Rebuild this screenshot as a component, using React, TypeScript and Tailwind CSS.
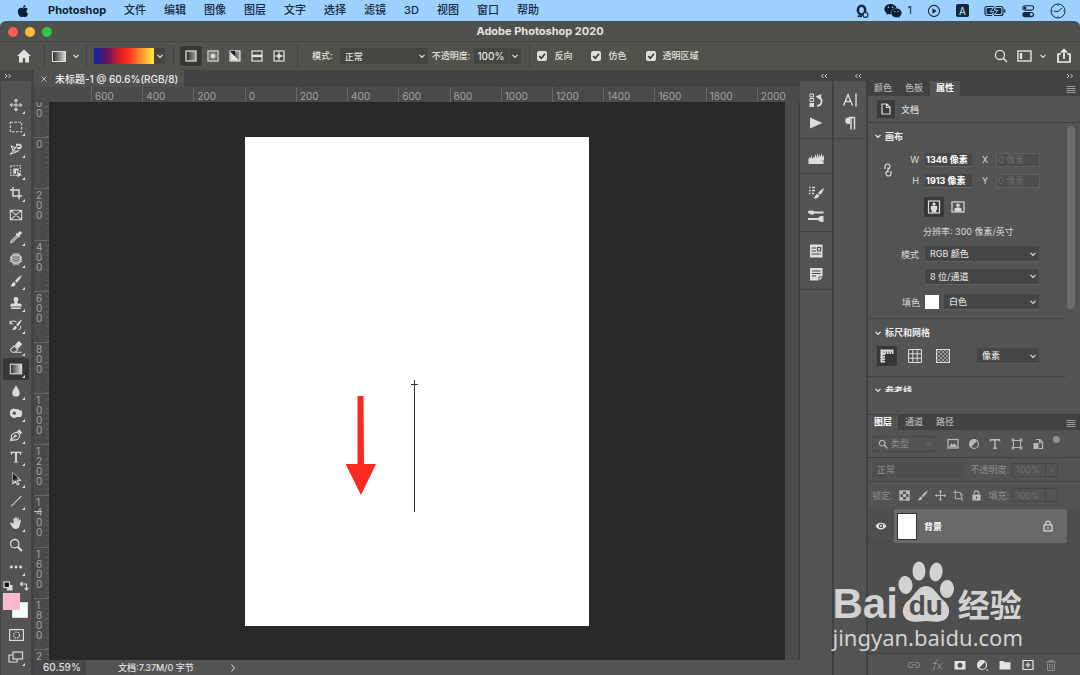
import type { ReactNode } from 'react';
import { FaApple, FaWeixin } from 'react-icons/fa';

type IconProps = { children: ReactNode; size?: string; box?: string; className?: string };

function Icon({ children, size = 'size-4', box = '0 0 16 16', className = '' }: IconProps) {
  return (
    <svg
      viewBox={box}
      className={`${size} shrink-0 ${className}`}
      fill="none"
      stroke="currentColor"
      strokeWidth="1.2"
      aria-hidden="true"
    >
      {children}
    </svg>
  );
}

const solid = { fill: 'currentColor', stroke: 'none' };

function Chevron({ className = '' }: { className?: string }) {
  return (
    <Icon size="size-2" box="0 0 8 8" className={className}>
      <path d="M1.5 2.8 4 5.3l2.5-2.5" />
    </Icon>
  );
}

function DoubleChevron({ flip = false }: { flip?: boolean }) {
  return (
    <Icon size="size-2" box="0 0 8 8" className={`text-[#cfcfcf] ${flip ? 'rotate-180' : ''}`}>
      <path d="M1 2 3 4 1 6M4.500 2l2 2-2 2" strokeWidth="1" />
    </Icon>
  );
}

const menus = ['文件', '编辑', '图像', '图层', '文字', '选择', '滤镜', '3D', '视图', '窗口', '帮助'];

function MenuBar() {
  return (
    <header className="flex h-[21px] shrink-0 items-center justify-between bg-[#9dd1ff] pr-[14px] pl-4 text-[11px] text-[#12283d]">
      <nav className="flex items-center gap-[18px]">
        <FaApple className="size-3.5 text-[#0b1d30]" />
        <button className="leading-none font-bold text-[#0b1d30]">Photoshop</button>
        {menus.map((m) => (
          <button key={m} className="leading-none font-medium">
            {m}
          </button>
        ))}
      </nav>
      <div className="flex items-center gap-[15px]">
        <Icon size="size-3.5">
          <ellipse cx="7.5" cy="7" rx="4.2" ry="5" strokeWidth="3" />
          <circle cx="12" cy="12.5" r="2.8" fill="#9dd1ff" strokeWidth="1.3" />
          <path d="M3 14h5" strokeWidth="2" />
        </Icon>
        <span className="flex items-center gap-1.5">
          <FaWeixin className="size-[18px] text-[#0b1d30]" />
          <span>1</span>
        </span>
        <Icon size="size-3.5">
          <circle cx="8" cy="8" r="6.4" />
          <path d="M6.2 4.8 11 8l-4.8 3.2z" {...solid} />
        </Icon>
        <span className="flex size-[13px] items-center justify-center rounded-[2px] bg-[#12283d] text-[10px] leading-none text-[#cfe8ff]">
          A
        </span>
        <Icon size="h-3 w-[22px]" box="0 0 22 12">
          <rect x="1" y="1.5" width="18" height="9" rx="2" />
          <rect x="2.6" y="3" width="14.8" height="6" rx="1" {...solid} />
          <path d="M20.8 4.5v3" strokeWidth="1.4" />
          <path d="M11.5 0 6 6.8h3.4L8.3 12 14 5.2h-3.4z" fill="#12283d" stroke="#9dd1ff" strokeWidth="1" />
        </Icon>
        <Icon size="size-3.5">
          <rect x="2" y="2" width="12.5" height="5" rx="2.5" />
          <circle cx="4.7" cy="4.5" r="1.6" {...solid} />
          <rect x="1.5" y="9" width="13.5" height="6" rx="3" {...solid} />
          <circle cx="11.8" cy="12" r="1.7" fill="#9dd1ff" stroke="none" />
        </Icon>
        <Icon size="size-4">
          <circle cx="8" cy="8" r="7" strokeWidth="1" />
          <path d="M12 4.800 8 8.500l-4-.3" strokeWidth="1" />
          <path d="M8 1.500v1.500M8 13v1.500M1.500 8H3M13 8h1.500" strokeWidth=".6" />
        </Icon>
      </div>
    </header>
  );
}

function TitleBar() {
  return (
    <div className="shrink-0 bg-[#9dd1ff]">
      <div className="grid h-5 grid-cols-[1fr_auto_1fr] items-center rounded-t-md border-t border-[#42505a] bg-[#50514c] px-2">
        <div className="flex gap-[7px]">
          <button aria-label="关闭" className="size-2.5 rounded-full bg-[#fb5f5b]" />
          <button aria-label="最小化" className="size-2.5 rounded-full bg-[#fdbb40]" />
          <button aria-label="全屏" className="size-2.5 rounded-full bg-[#35c648]" />
        </div>
        <h1 className="text-[11px] leading-none font-bold text-[#e4e4e0]">Adobe Photoshop 2020</h1>
      </div>
    </div>
  );
}

function Select({ label, value, className = '' }: { label: string; value: string; className?: string }) {
  return (
    <span className={`grid items-center ${className}`}>
      <select
        aria-label={label}
        className="col-start-1 row-start-1 h-full w-full min-w-0 appearance-none bg-transparent px-[5px] leading-none outline-none"
      >
        <option>{value}</option>
      </select>
      <Chevron className="pointer-events-none col-start-1 row-start-1 mr-0.5 justify-self-end" />
    </span>
  );
}

function Check({ label }: { label: string }) {
  return (
    <label className="flex items-center gap-[7px]">
      <span className="grid size-2.5 items-center">
        <input type="checkbox" defaultChecked className="col-start-1 row-start-1 size-2.5 appearance-none rounded-[2px] bg-[#dededa]" />
        <Icon size="size-2.5" box="0 0 10 10" className="pointer-events-none col-start-1 row-start-1 text-[#333]">
          <path d="M2.2 5 4.3 7.2 8 2.8" strokeWidth="1.6" />
        </Icon>
      </span>
      {label}
    </label>
  );
}

function Bar() {
  return <span className="h-[22px] w-px bg-[#434440]" />;
}

const gradientStyles: { name: string; art: ReactNode }[] = [
  { name: '线性渐变', art: <rect x="1" y="1" width="10" height="10" fill="url(#lin)" /> },
  { name: '径向渐变', art: <rect x="1" y="1" width="10" height="10" fill="url(#rad)" /> },
  {
    name: '角度渐变',
    art: (
      <>
        <rect x="1" y="1" width="10" height="10" fill="url(#lin)" />
        <path d="M1.500 2v8.500h8.500z" fill="#e4e4e4" stroke="none" />
        <path d="M1 1h5v5z" fill="#1c1c1c" stroke="none" />
      </>
    ),
  },
  {
    name: '对称渐变',
    art: (
      <>
        <rect x="1" y="1" width="10" height="10" fill="#4a4a47" />
        <path d="M1 5.9h10" strokeWidth="2.5" />
      </>
    ),
  },
  {
    name: '菱形渐变',
    art: (
      <>
        <rect x="1" y="1" width="10" height="10" fill="#4a4a47" />
        <path d="M6 2.5 7.2 4.8 9.5 6 7.2 7.2 6 9.5 4.8 7.2 2.5 6l2.3-1.2z" {...solid} />
        <path d="M6 1v10M1 6h10" strokeWidth=".7" />
      </>
    ),
  },
];

function OptionsBar() {
  return (
    <div className="flex h-[29px] shrink-0 items-center justify-between border-t border-[#464742] bg-[#51524c] pr-2 pl-4 text-[9px] font-medium text-[#e2e2de]">
      <div className="flex items-center">
        <button aria-label="主页" className="mr-3">
          <Icon size="size-4">
            <path d="M8 1.5 1 8h2v6.5h3.8V10h2.4v4.5H13V8h2z" {...solid} />
          </Icon>
        </button>
        <Bar />
        <button aria-label="渐变工具" className="mr-1.5 ml-[7px] flex items-center gap-1.5">
          <span className="h-[11px] w-[14px] border border-[#dcdcdc] bg-linear-to-r from-[#383838] to-[#d6d6d6]" />
          <Chevron />
        </button>
        <Bar />
        <button
          aria-label="编辑渐变"
          className="ml-[7px] h-4 w-[60px] bg-[linear-gradient(90deg,#1b1fa0_3%,#5a1560_20%,#f21f1c_48%,#ff3a1e_60%,#ffe13a_97%)]"
        />
        <button aria-label="渐变拾色器" className="mr-2 flex h-4 w-[11px] items-center justify-center bg-[#454641]">
          <Chevron />
        </button>
        <Bar />
        <div className="mr-[7px] ml-1.5 flex">
          {gradientStyles.map((g, i) => (
            <button
              key={g.name}
              aria-label={g.name}
              className={`flex h-5 w-[22px] items-center justify-center ${i === 0 ? 'rounded-[2px] bg-[#383936]' : ''}`}
            >
              <Icon size="size-3" box="0 0 12 12">
                <defs>
                  <linearGradient id="lin">
                    <stop offset="0" stopColor="#2c2c2c" />
                    <stop offset="1" stopColor="#a0a0a0" />
                  </linearGradient>
                  <radialGradient id="rad">
                    <stop offset=".1" stopColor="#eee" />
                    <stop offset=".9" stopColor="#555" />
                  </radialGradient>
                </defs>
                {g.art}
              </Icon>
            </button>
          ))}
        </div>
        <Bar />
        <span className="mr-[7px] ml-[14px]">模式:</span>
        <Select label="模式" value="正常" className="h-4 w-[88px] bg-[#454641]" />
        <label className="ml-1 flex items-center gap-1">
          不透明度:
          <input defaultValue="100%" className="h-4 w-[34px] bg-[#454641] px-[3px] text-[10px] outline-none" />
        </label>
        <button aria-label="不透明度滑块" className="mr-2 ml-px flex h-4 w-3 items-center justify-center bg-[#454641]">
          <Chevron />
        </button>
        <Bar />
        <div className="ml-[7px] flex gap-[19px]">
          <Check label="反向" />
          <Check label="仿色" />
          <Check label="透明区域" />
        </div>
      </div>
      <div className="flex items-center gap-[9px]">
        <button aria-label="搜索">
          <Icon size="size-3.5">
            <circle cx="6.8" cy="6.8" r="5.2" strokeWidth="1.5" />
            <path d="m10.6 10.6 4.2 4.2" strokeWidth="1.8" />
          </Icon>
        </button>
        <button aria-label="工作区" className="flex items-center gap-[7px]">
          <Icon size="h-3 w-[15px]" box="0 0 15 12">
            <rect x="1" y="1" width="13" height="10" strokeWidth="1.4" />
            <path d="M2.8 3h2.4v6H2.8z" {...solid} />
          </Icon>
          <Chevron />
        </button>
        <button aria-label="共享">
          <Icon size="size-4" className="text-[#efefec]">
            <path d="M5 6H2v8h12V6h-3M8 11V2M5 4.5 8 1.6l3 2.9" strokeWidth="1.7" />
          </Icon>
        </button>
      </div>
    </div>
  );
}

const tools: { name: string; art: ReactNode; corner?: boolean }[] = [
  { name: '移动', art: <path d="M8 1.5v13M1.5 8h13M6 3.5l2-2 2 2M6 12.5l2 2 2-2M3.5 6l-2 2 2 2M12.5 6l2 2-2 2" /> },
  { name: '矩形选框', art: <rect x="1.5" y="2.5" width="13" height="11" strokeDasharray="3 1.6" /> },
  {
    name: '磁性套索',
    art: (
      <>
        <path d="m2 4 5 3 3-4M2 4l3 6-4 4 6-2 5-3M7 7l-2 3 5 1" />
        <path d="M8 3h3.5a2 2 0 0 1 0 4H9" strokeWidth="2.2" />
      </>
    ),
  },
  {
    name: '对象选择',
    art: (
      <>
        <rect x="2" y="2" width="11" height="11" strokeDasharray="2 1.2" />
        <path d="M5 5h6v3L8 7v4H5z" {...solid} />
        <path d="m9 8 6 5-3 .2L10.2 16z" {...solid} />
      </>
    ),
  },
  { name: '裁剪', art: <path d="M4.5 1v10.5H15M1 4.5h10.5V15" strokeWidth="1.7" /> },
  { name: '图框', corner: false, art: <path d="M1.5 2.5h13v11h-13zM1.5 2.5l13 11M14.5 2.5l-13 11" /> },
  {
    name: '吸管',
    art: (
      <>
        <path d="m9.5 5.5-7 7L2 14.3 3.8 14l6.8-7" />
        <path d="m7.5 4.5 1.2-1.2 1 .8L12 1.6c1.6-1 3.4.8 2.4 2.4L12 6.3l.7 1-1.2 1.2z" {...solid} />
      </>
    ),
  },
  {
    name: '修补',
    art: (
      <>
        <rect x="3" y="3.5" width="10" height="9" rx="2.5" fill="currentColor" fillOpacity=".45" />
        <path d="M5.5 1v2.5M8 1v2.5M10.5 1v2.5M5.5 12.5V15M8 12.5V15M10.5 12.5V15M.8 6H3M.8 8.2H3M.8 10.5H3M13 6h2.2M13 8.2h2.2M13 10.5h2.2" />
      </>
    ),
  },
  {
    name: '画笔',
    art: (
      <path
        d="M14.8 1.2c-3.4 1.8-5.8 4.1-8 7l1.8 1.8c2.8-2.4 4.8-5 6.2-8.800zM6 9.2c-2 0-2.4 1.6-2.8 2.8-.4 1-1.2 1.6-2.2 1.8 2.6 1 6.2.6 6.6-2.8z"
        {...solid}
      />
    ),
  },
  {
    name: '仿制图章',
    art: (
      <path
        d="M8 1a2.8 2.8 0 0 0-2.6 3.8C6 6.4 6.3 7 6.3 8.5H3.5a2 2 0 0 0-2 2V12h13v-1.5a2 2 0 0 0-2-2H9.7c0-1.5.3-2.1.9-3.7A2.8 2.8 0 0 0 8 1zM2.5 13h11v1.8h-11z"
        {...solid}
      />
    ),
  },
  {
    name: '历史记录画笔',
    art: (
      <>
        <path
          d="M15 1.5C12 3 10 5.5 8.2 8l1.5 1.6c2.3-2 4.2-4.7 5.3-8.1zM7.5 9c-1.6 0-2 1.4-2.5 2.6-.3.9-1 1.4-2 1.6 2.3 1 5.5.5 6-2.5z"
          {...solid}
        />
        <path d="M1.5 5.5c2-2.5 5-2.6 7-.8M4.8 6.5H1.3V3M13.5 9c.3 2-.5 3.700-2.200 4.800" />
      </>
    ),
  },
  {
    name: '橡皮擦',
    art: (
      <>
        <path d="m6.5 6 4-4.3c.5-.5 1-.5 1.5 0L14.5 4c.5.5.5 1 0 1.5l-4.500 4.500z" {...solid} />
        <path d="M5.8 6.7 2 10.5c-.4.5-.4 1 0 1.5L4 14h3l3-3.400zM4 14h10.500" />
      </>
    ),
  },
  {
    name: '渐变',
    art: (
      <>
        <defs>
          <linearGradient id="toolGradient">
            <stop offset="0" stopColor="#2e2e2e" />
            <stop offset="1" stopColor="#dedede" />
          </linearGradient>
        </defs>
        <rect x="1.500" y="2.500" width="13" height="11" fill="url(#toolGradient)" />
      </>
    ),
  },
  { name: '模糊', art: <path d="M8 1.500C6.500 5 3.800 7 3.800 10.200a4.200 4.200 0 0 0 8.400 0C12.200 7 9.500 5 8 1.500z" {...solid} /> },
  {
    name: '海绵',
    art: (
      <path
        fillRule="evenodd"
        d="M1 8a4.500 4.500 0 0 1 6.500-4.500c2 .2 4 .4 5 1.500H15v5l-1.500 2.500H9A5 5 0 0 1 1 8zm3 .2a2 1.800 0 1 0 4 0 2 1.800 0 1 0-4 0z"
        {...solid}
      />
    ),
  },
  {
    name: '钢笔',
    art: (
      <>
        <path d="M2 14.200 3.200 8c.3-1 3-3 6-3.300l3 3c-.4 3-2.200 5.400-3.200 5.600L2 14.200l4.500-4.600" />
        <circle cx="7.300" cy="9" r="1" />
        <path d="m9.500 3.500 2-2 3.500 3.500-2 2z" {...solid} />
      </>
    ),
  },
  {
    name: '文字',
    art: (
      <path
        d="M2 2h12v3.500h-1c-.2-1.500-.7-2-2-2H9.100v8.800c0 .9.500 1 1.700 1.100v.8H5.200v-.8c1.200-.1 1.700-.2 1.700-1.100V3.500H5c-1.300 0-1.800.5-2 2H2z"
        {...solid}
      />
    ),
  },
  {
    name: '路径选择',
    art: (
      <>
        <path d="M4.500 1.500v12l3-2.800 2 4 1.800-.8-1.900-4 3.800-.3z" />
        <path d="M4.500 1.500v8l5.500-3z" fill="#161616" stroke="none" />
      </>
    ),
  },
  { name: '直线', art: <path d="M14 2.500 2.500 14" /> },
  {
    name: '抓手',
    art: (
      <path
        d="M5.200 9V3.200c0-1.200 1.500-1.200 1.600 0l.3 3.300V2c0-1.300 1.700-1.300 1.800 0l.2 4.500.5-3.700c.2-1.200 1.800-1 1.700.2l-.3 4 .9-2.300c.5-1.100 2-.6 1.700.6l-1.400 5.500c-.6 2.500-2 4-4.400 4-2.300 0-3.400-1-4.300-2.700L1.400 8.800C1 7.700 2.300 7 3.200 7.800z"
        {...solid}
      />
    ),
  },
  {
    name: '缩放',
    corner: false,
    art: (
      <>
        <circle cx="6.500" cy="6.500" r="4.800" strokeWidth="1.500" />
        <path d="m10 10 4.800 4.800" strokeWidth="2.200" />
      </>
    ),
  },
  {
    name: '编辑工具栏',
    art: (
      <>
        <circle cx="2.700" cy="8" r="1.700" {...solid} />
        <circle cx="8" cy="8" r="1.700" {...solid} />
        <circle cx="13.300" cy="8" r="1.700" {...solid} />
      </>
    ),
  },
];

function Corner() {
  return (
    <Icon size="size-[3px]" box="0 0 3 3" className="absolute right-1 bottom-0.5">
      <path d="M3 0v3H0z" {...solid} />
    </Icon>
  );
}

function Toolbar() {
  return (
    <aside className="flex w-8 shrink-0 flex-col items-center border-x border-[#454446] bg-[#535254] text-[#dcdcdc]">
      <div className="flex h-[11px] shrink-0 items-center self-stretch bg-[#454545] pl-[3px]">
        <DoubleChevron />
      </div>
      <div className="mt-[13px] flex flex-col">
        {tools.map((t) => (
          <button
            key={t.name}
            aria-label={t.name}
            className={`relative flex h-[22px] w-[26px] items-center justify-center ${t.name === '渐变' ? 'rounded-[2px] bg-[#363537]' : ''}`}
          >
            <Icon size="size-3.5">{t.art}</Icon>
            {t.corner !== false && <Corner />}
          </button>
        ))}
      </div>
      <div className="mt-[3px] flex gap-1.5">
        <button aria-label="默认颜色">
          <Icon size="size-2.5" box="0 0 10 10">
            <rect x="4" y="4" width="5.500" height="5.500" {...solid} />
            <rect x="1" y="1" width="5.500" height="5.500" fill="#111" />
          </Icon>
        </button>
        <button aria-label="切换颜色">
          <Icon size="size-2.5" box="0 0 10 10">
            <path d="M3.500 1 1.500 3l2 2M1.500 3H7.500V8.500M5.500 6.800l2 2 2-2" />
          </Icon>
        </button>
      </div>
      <div className="grid h-7 w-[26px] shrink-0 grid-cols-[9px_8px_8px] grid-rows-[9px_8px_8px] pt-0.5">
        <button aria-label="背景色" className="col-span-2 col-start-2 row-span-2 row-start-2 border border-[#d8d8d8] bg-[#f7fffd]" />
        <button aria-label="前景色" className="col-span-2 col-start-1 row-span-2 row-start-1 border border-[#e8c9d6] bg-[#ffb5d0]" />
      </div>
      <button aria-label="快速蒙版" className="mt-[5px] flex h-[22px] items-center">
        <Icon size="h-3 w-[15px]" box="0 0 15 12">
          <rect x=".6" y=".6" width="13.800" height="10.800" />
          <circle cx="7.500" cy="6" r="3" strokeDasharray="1.500 1" />
        </Icon>
      </button>
      <button aria-label="屏幕模式" className="relative flex h-[22px] w-[26px] items-center justify-center">
        <Icon size="h-3 w-4" box="0 0 16 12">
          <path d="M5 4H1v7h8V8.500" />
          <rect x="5" y="1" width="9.500" height="7" />
        </Icon>
        <Corner />
      </button>
    </aside>
  );
}

const topMarks = [600, 400, 200, 0, 200, 400, 600, 800, 1000, 1200, 1400, 1600, 1800, 2000];
const sideMarks = [200, 0, 200, 400, 600, 800, 1000, 1200, 1400, 1600, 1800, 2000];

function DocumentArea() {
  return (
    <main className="flex min-w-0 flex-1 flex-col bg-[#4b4a4b]">
      <div className="flex h-[17px] shrink-0 bg-[#434343] text-[10px] text-[#ececec]">
        <div className="flex items-center gap-[7px] bg-[#525152] px-1.5">
          <button aria-label="关闭文档" className="text-[#bdbdbd]">
            <Icon size="size-2" box="0 0 8 8">
              <path d="m1.500 1.500 5 5M6.500 1.500l-5 5" strokeWidth="1" />
            </Icon>
          </button>
          <span className="leading-none font-medium whitespace-nowrap">未标题-1 @ 60.6%(RGB/8)</span>
        </div>
      </div>
      <div className="flex h-[15px] shrink-0 overflow-hidden text-[10px] leading-none text-[#a2a2a2]">
        <div className="ml-[57px] flex w-[717px] shrink-0">
          {topMarks.map((m, i) => (
            <div key={i} className="min-w-0 flex-1 border-l border-[#666] pt-1 pl-[3px]">
              {m}
            </div>
          ))}
        </div>
      </div>
      <div className="flex min-h-0 flex-1">
        <div className="relative w-[15px] shrink-0 overflow-hidden text-[10px] leading-[10px] text-[#a2a2a2]">
          <div className="-mt-4 flex h-[614px] flex-col">
            {sideMarks.map((m, i) => (
              <div
                key={i}
                className="min-h-0 flex-1 border-t border-[#666] bg-[repeating-linear-gradient(180deg,transparent_0,transparent_4px,#5c5c5c_4px,#5c5c5c_5px)] bg-[length:3px_100%] bg-right bg-no-repeat pt-px pl-0.5"
              >
                {String(m)
                  .split('')
                  .map((d, k) => (
                    <span key={k} className="block">
                      {d}
                    </span>
                  ))}
              </div>
            ))}
          </div>
          <span className="absolute top-[409px] left-0 h-px w-2 bg-[#c0c0c0]" />
        </div>
        <div className="flex flex-1 items-center justify-center overflow-hidden bg-[#282829]">
          <div className="h-[489px] w-[344px] shrink-0 bg-white">
            <svg viewBox="0 0 344 489" className="size-full" role="img" aria-label="渐变方向">
              <path d="M112.500 259h6l.5 68h12L116 358 100.500 327h12z" fill="#fb2a20" />
              <path d="M169.500 243v132M166 247.500h7" stroke="#333" strokeWidth="1" />
            </svg>
          </div>
        </div>
        <div className="w-[15px] shrink-0 border-r-2 border-[#404040] bg-[#4b4b4b]" />
      </div>
      <div className="flex h-[15px] shrink-0 items-center bg-[#535353] text-[9px] text-[#e0e0e0]">
        <span className="h-full w-[52px] bg-[#474747] pl-[9px] text-[10px] leading-[15px] font-medium">60.59%</span>
        <span className="ml-8 leading-none font-medium">文档:7.37M/0 字节</span>
        <button aria-label="状态菜单" className="ml-[34px]">
          <Icon size="size-2.5" box="0 0 10 10">
            <path d="m3.500 1.500 3 3.500-3 3.500" strokeWidth="1" />
          </Icon>
        </button>
      </div>
    </main>
  );
}

function Dock({ groups }: { groups: { name: string; art: ReactNode }[][] }) {
  return (
    <div className="flex w-[34px] shrink-0 flex-col border-r-2 border-[#414141] bg-[#535353] text-[#dcdcdc]">
      <div className="flex h-[11px] shrink-0 items-center justify-end bg-[#434343] pr-1">
        <DoubleChevron flip />
      </div>
      {groups.map((g, i) => (
        <div key={i} className="flex flex-col items-center border-b border-[#3f3f3f] pt-[7px] pb-1">
          {g.map((b) => (
            <button key={b.name} aria-label={b.name} className="flex h-[23px] w-6 items-center justify-center">
              <Icon size="size-4">{b.art}</Icon>
            </button>
          ))}
        </div>
      ))}
    </div>
  );
}

const dockOne = [
  [
    {
      name: '历史记录',
      art: (
        <>
          <path d="M2 2h3.500v3H2zM2 6.500h3.500v3H2z" strokeWidth="1" />
          <path d="M1.500 11H6v4H1.500z" {...solid} />
          <path d="M9 14c5-.5 6-6 2.500-9" strokeWidth="1.700" />
          <path d="M7.500 4.500 13.500 2l-1 6z" {...solid} />
        </>
      ),
    },
    { name: '动作', art: <path d="M2 2.500 14.500 8 2 13.500z" {...solid} /> },
  ],
  [
    {
      name: '直方图',
      art: (
        <path
          d="M.5 12.500V9l1-2 1 2 1-4 1 4 1-2 1 1 1-4 1 4 1-5 1 5 1-4 1 3 1-4 1 4 1-2 .5 3v2.500zM.5 11h15v3H.5z"
          {...solid}
        />
      ),
    },
  ],
  [
    {
      name: '画笔设置',
      art: (
        <>
          <path d="M1 2.500h1.500M1 5.500h1.500M1 8.500h1.500M4 2.500h3M4 5.500h3M4 8.500h2" strokeWidth="1.600" />
          <path
            d="M16 3c-2.500 1.500-4.500 3-6 5.200L12 9.800C14 8 15.500 6 16 3zM9.500 9c-1.500 0-2 1.200-2.300 2.200-.3.900-1 1.500-2 1.800 2.300 1 5.600.4 6.100-2.500z"
            {...solid}
          />
        </>
      ),
    },
    {
      name: '画笔',
      art: (
        <>
          <path d="M5 4.500h10.500M0 11h10" strokeWidth="2" />
          <path
            d="M0 3c2 0 4-1.200 6 .3V6C4.500 7 3.500 6.600 2.500 6.200 0 5.500 0 4 0 3zM9.500 11c1-2.500 3-3 6-3v6c-3 0-5-.5-6-3z"
            {...solid}
          />
        </>
      ),
    },
  ],
  [
    {
      name: '库',
      art: (
        <>
          <rect x="2" y="1.500" width="12.500" height="13" {...solid} />
          <path d="M3.500 5H8M3.500 8H8M3.500 11h9M9.500 4.500h3v3.500h-3z" stroke="#4a4a4a" />
        </>
      ),
    },
    {
      name: '注释',
      art: (
        <>
          <path d="M2 2h12.500v8.500h-4V14.500H2zM11.500 11.500H14.500L11.500 14.500z" {...solid} />
          <path d="M4 5h8.500M4 7.500h8.500M4 10h4" stroke="#4a4a4a" />
        </>
      ),
    },
  ],
];

const dockTwo = [
  [
    { name: '字符', art: <path d="M1.500 13.500 6 2.500l4.500 11M3 9.500h6M14 1.500v13" strokeWidth="1.400" /> },
    {
      name: '段落',
      art: (
        <>
          <path d="M8 2.500H6.500a3.200 3.200 0 0 0 0 6.400H8z" {...solid} />
          <path d="M9 2v12.500M12.500 2v12.500M7 2.600h6" strokeWidth="1.500" />
        </>
      ),
    },
  ],
];

function Tabs({ items, active }: { items: string[]; active: string }) {
  return (
    <div className="flex shrink-0 items-center gap-px bg-[#424242] pr-1 font-medium text-[#b4b4b4]">
      {items.map((t) => (
        <button
          key={t}
          className={`px-1.5 pt-0.5 pb-[3px] leading-[10px] ${t === active ? 'bg-[#535353] font-bold text-white' : ''}`}
        >
          {t}
        </button>
      ))}
      <button aria-label="面板菜单" className="ml-auto">
        <Icon size="size-2.5" box="0 0 10 10">
          <path d="M.5 2.500h9M.5 4.500h9M.5 6.500h9M.5 8.500h9" strokeWidth=".8" />
        </Icon>
      </button>
    </div>
  );
}

function Heading({ children, className = '' }: { children: string; className?: string }) {
  return (
    <button className={`flex shrink-0 items-center gap-[3px] pl-1.5 leading-none font-bold text-[#ededed] ${className}`}>
      <Chevron />
      {children}
    </button>
  );
}

function SizeRow({ a, value, b }: { a: string; value: string; b: string }) {
  return (
    <div className="flex h-[21px] items-center text-[9px]">
      <label className="flex items-center gap-1.5">
        <span className="w-3 text-right">{a}</span>
        <input
          defaultValue={value}
          className="h-[14px] w-[47px] border-b border-[#666] bg-[#474747] pl-px font-bold text-white outline-none"
        />
      </label>
      <label className="ml-2.5 flex items-center gap-1.5">
        <span className="w-2">{b}</span>
        <input disabled value="0 像素" readOnly className="h-[14px] w-11 border border-[#5e5e5e] bg-[#4d4d4d] pl-px text-[#6a6a6a]" />
      </label>
    </div>
  );
}

const dark = 'bg-[#454545] border-b border-[#616161] font-medium';

function Properties() {
  return (
    <section className="flex flex-col">
      <Tabs items={['颜色', '色板', '属性']} active="属性" />
      <div className="flex h-[27px] items-center gap-1.5 border-b border-[#404040] pl-[9px] font-medium">
        <span className="flex size-[18px] items-center justify-center bg-[#3a3a3a]">
          <Icon size="size-3" box="0 0 12 12">
            <path d="M2 1h5l3 3v7H2zM6.500 1v3.500H10" />
          </Icon>
        </span>
        文档
      </div>
      <div className="flex">
        <div className="flex min-w-0 flex-1 flex-col">
          <Heading className="h-[26px]">画布</Heading>
          <div className="flex items-center gap-3.5 pl-[15px]">
            <Icon size="h-3.5 w-2.5" box="0 0 10 14">
              <path d="M2 6V3.500a2.500 2.500 0 0 1 5 0c0 1.500-1 2.500-2.500 2.500M8 8v2.500a2.500 2.500 0 0 1-5 0C3 9 4 8 5.500 8M5 4.500v5" />
            </Icon>
            <div>
              <SizeRow a="W" value="1346 像素" b="X" />
              <SizeRow a="H" value="1913 像素" b="Y" />
            </div>
          </div>
          <div className="flex h-8 items-center gap-1 pl-14">
            <button aria-label="纵向" className="flex size-5 items-center justify-center bg-[#373737]">
              <Icon size="size-3.5" box="0 0 14 14">
                <rect x="1.500" y="1" width="11" height="12" />
                <circle cx="7" cy="4" r="1.600" {...solid} />
                <path d="M3.800 7c0-1 .7-1.200 1.500-1.200h3.400c.8 0 1.500.2 1.500 1.200v3H9.300v2.500H4.700V10h-.9z" {...solid} />
              </Icon>
            </button>
            <button aria-label="横向" className="flex size-5 items-center justify-center">
              <Icon size="size-3.5" box="0 0 14 14">
                <rect x="1" y="2" width="12" height="10" />
                <circle cx="7" cy="5.200" r="1.700" {...solid} />
                <path d="M3.500 11.500V8.500L5.500 7.500h3l2 1v3z" {...solid} />
              </Icon>
            </button>
          </div>
          <p className="pl-[55px] leading-[18px]">分辨率: 300 像素/英寸</p>
          <div className="flex h-[26px] items-center justify-end gap-1.5 pr-[27px]">
            模式
            <Select label="模式" value="RGB 颜色" className={`h-4 w-[114px] ${dark}`} />
          </div>
          <div className="flex h-[19px] items-center justify-end pr-[27px]">
            <Select label="位深度" value="8 位/通道" className={`h-4 w-[114px] ${dark}`} />
          </div>
          <div className="flex h-8 items-center justify-end gap-[5px] pr-[27px]">
            填色
            <span className="size-[14px] bg-white" />
            <Select label="填色" value="白色" className={`h-4 w-[95px] ${dark}`} />
          </div>
          <Heading className="h-7 border-t border-[#444]">标尺和网格</Heading>
          <div className="flex items-center gap-2 pr-[27px] pb-2.5 pl-[9px]">
            <button aria-label="标尺" className="flex size-5 items-center justify-center bg-[#373737]">
              <Icon size="size-3.5" box="0 0 14 14">
                <path d="M.5.5h13V5H5v8.500H.5z" {...solid} />
                <path
                  d="M4 2.500V4M6.500 2.500V5M9 2.500V5M11.500 2.500V5M2.500 6.500H5M2.500 9H5M2.500 11.500H5"
                  stroke="#373737"
                  strokeWidth=".8"
                />
              </Icon>
            </button>
            <button aria-label="网格" className="flex size-5 items-center justify-center">
              <Icon size="size-3.5" box="0 0 14 14">
                <path d="M.5.5h13v13H.5zM4.800.5v13M9.200.5v13M.5 4.800h13M.5 9.200h13" strokeWidth="1" />
              </Icon>
            </button>
            <button aria-label="透明网格" className="flex size-5 items-center justify-center">
              <Icon size="size-3.5" box="0 0 14 14">
                <rect x=".5" y=".5" width="13" height="13" strokeWidth="1" />
                <path
                  d="m1 5 4-4M1 9l8-8M1 13 13 1M5 13l8-8M9 13l4-4M1 9l4 4M1 5l8 8M1 1l12 12M5 1l8 8M9 1l4 4"
                  strokeWidth=".5"
                />
              </Icon>
            </button>
            <Select label="单位" value="像素" className={`ml-auto h-4 w-[62px] ${dark}`} />
          </div>
          <div className="h-4 overflow-hidden border-t border-[#444]">
            <Heading className="h-[26px]">参考线</Heading>
          </div>
        </div>
        <div className="w-3.5 shrink-0 pt-[3px] pl-px">
          <div className="h-[183px] w-2 rounded-full bg-[#6b6b6b]" />
        </div>
      </div>
    </section>
  );
}

const filters: { name: string; art: ReactNode }[] = [
  {
    name: '像素图层',
    art: (
      <>
        <rect x="1" y="1.500" width="10" height="8.500" />
        <path d="m2 9 2.500-4L6 7l1.500-2L10 9z" {...solid} />
      </>
    ),
  },
  {
    name: '调整图层',
    art: (
      <>
        <circle cx="6" cy="6" r="4.500" />
        <path d="M9.200 2.800A4.500 4.500 0 0 0 2.800 9.200z" {...solid} />
      </>
    ),
  },
  { name: '文字图层', art: <path d="M1.500 3.500V1.800h9v1.700M6 1.800v8.500M4.200 10.300h3.600" strokeWidth="1.500" /> },
  { name: '形状图层', art: <path d="M2.500 2.500h7v7h-7zM1 1h2v2H1zM9 1h2v2H9zM1 9h2v2H1zM9 9h2v2H9z" strokeWidth="1" /> },
  {
    name: '智能对象',
    art: (
      <>
        <path d="M4 1.500h4l2.500 2.500v6.500H7M7.500 1.500V4.500h3" />
        <rect x="1.500" y="5" width="5" height="6" {...solid} />
      </>
    ),
  },
];

const locks: { name: string; art: ReactNode }[] = [
  {
    name: '锁定透明像素',
    art: (
      <>
        <rect x="1" y="1" width="10" height="10" />
        <path
          d="M1 1h3.300v3.300H1zM7.700 1H11v3.300H7.700zM4.300 4.300h3.400v3.400H4.300zM1 7.700h3.300V11H1zM7.700 7.700H11V11H7.700z"
          {...solid}
        />
      </>
    ),
  },
  {
    name: '锁定图像像素',
    art: (
      <path
        d="M12 0C9 2 7 4 5 6.500L6.500 8c2-2 4.500-4.500 5.500-8zM4.500 7.200C2.500 7.200 3 9.800.5 10.800c2 .7 5 .2 5.200-2.200z"
        {...solid}
      />
    ),
  },
  {
    name: '锁定位置',
    art: (
      <path
        d="M6 .5v11M.5 6h11M4.500 2 6 .5 7.500 2M4.500 10 6 11.500 7.500 10M2 4.500.5 6 2 7.500M10 4.500 11.500 6 10 7.500"
        strokeWidth="1"
      />
    ),
  },
  { name: '锁定画板', art: <path d="M2.500 0v9.500H10M0 2.500h7.500L11 6M7.500 2.500 10 9.500V12" strokeWidth="1" /> },
  {
    name: '全部锁定',
    art: (
      <>
        <rect x="1.500" y="5" width="9" height="6.500" {...solid} />
        <path d="M3.500 5V3.500a2.500 2.500 0 0 1 5 0V5" />
        <path d="M6 7v2.500" stroke="#505050" />
      </>
    ),
  },
];

const footer: { name: string; art: ReactNode; dim?: boolean }[] = [
  { name: '链接图层', dim: true, art: <path d="M5 3.500H3a2.500 2.500 0 0 0 0 5h2M7 3.500h2a2.500 2.500 0 0 1 0 5H7M3.500 6h5" strokeWidth="1" /> },
  {
    name: '图层样式',
    dim: true,
    art: <path d="M1 11.500c2 .5 2-1.500 2.500-4S4.500.5 7 1M2 4.500h4M6.500 5c1.500-1 2 5 4.500 4.500M11.200 4.800c-2-.5-3.200 5-5.200 4.700" strokeWidth="1" />,
  },
  {
    name: '添加蒙版',
    art: <path fillRule="evenodd" d="M.5 2h11v8.500H.5zM3.500 6.200a2.500 2.500 0 1 0 5 0 2.500 2.500 0 1 0-5 0z" {...solid} />,
  },
  {
    name: '调整图层',
    art: (
      <>
        <circle cx="6" cy="6" r="4.500" />
        <path d="M9.200 2.800A4.500 4.500 0 0 0 2.800 9.200z" {...solid} />
        <path d="M10 11h2" />
      </>
    ),
  },
  { name: '新建组', art: <path d="M.5 2h4l1 1.300h6v7.200H.5z" {...solid} /> },
  { name: '新建图层', art: <path d="M1 1.500h10v9H1zM6 3.500v5M3.500 6h5" /> },
  { name: '删除图层', dim: true, art: <path d="M1 3h10M4 3V1.500h4V3M2.500 4.500v7h7v-7M4.800 5v5M7.200 5v5" strokeWidth="1" /> },
];

function Percent({ label }: { label: string }) {
  return (
    <div className="ml-auto flex items-center">
      <label className="flex items-center gap-[3px] whitespace-nowrap">
        {label}
        <input value="100%" readOnly disabled className="h-[14px] w-[34px] border border-[#464646] pl-[3px] text-[#707070]" />
      </label>
      <span className="flex h-[14px] w-3 items-center justify-center border border-l-0 border-[#464646] text-[#606060]">
        <Chevron />
      </span>
    </div>
  );
}

function Layers() {
  return (
    <section className="flex min-h-0 flex-1 flex-col">
      <Tabs items={['图层', '通道', '路径']} active="图层" />
      <div className="flex h-7 shrink-0 items-center border-b border-[#404040] pr-5 pl-1 text-[#b8b8b8]">
        <span className="flex h-4 w-[63px] items-center rounded-[2px] border border-[#484848] pl-[5px] text-[#8c8c8c]">
          <Icon size="size-2.5" box="0 0 10 10" className="text-[#b8b8b8]">
            <circle cx="4.200" cy="4.200" r="2.800" />
            <path d="m6.300 6.300 3 3" strokeWidth="1.500" />
          </Icon>
          <Select label="筛选类型" value="类型" className="-ml-0.5 min-w-0 flex-1 [&>svg]:text-[#686868]" />
        </span>
        <div className="flex flex-1 items-center justify-between pl-3">
          {filters.map((f) => (
            <button key={f.name} aria-label={f.name}>
              <Icon size="size-3" box="0 0 12 12">
                {f.art}
              </Icon>
            </button>
          ))}
          <button aria-label="筛选开关" className="mb-2 size-[7px] rounded-full bg-[#909090]" />
        </div>
      </div>
      <div className="flex h-6 shrink-0 items-center border-b border-[#454545] pr-[22px] pl-1 text-[#8e8e8e]">
        <Select label="混合模式" value="正常" className="h-4 w-[92px] bg-[#4e4e4e] [&>svg]:hidden" />
        <Percent label="不透明度:" />
      </div>
      <div className="flex h-[26px] shrink-0 items-center justify-between pr-[22px] pl-1 text-[#8e8e8e]">
        <span>锁定:</span>
        {locks.map((l) => (
          <button key={l.name} aria-label={l.name} className="text-[#bcbcbc]">
            <Icon size="size-[11px]" box="0 0 12 12">
              {l.art}
            </Icon>
          </button>
        ))}
        <div className="flex">
          <Percent label="填充:" />
        </div>
      </div>
      <div className="flex flex-1 flex-col bg-[#4e4e4e] pt-px">
        <div className="flex h-[34px] items-stretch pr-[13px]">
          <button aria-label="图层可见性" className="flex w-[26px] items-center justify-center border-b border-[#464646]">
            <Icon size="size-3" box="0 0 12 12" className="text-[#e4e4e4]">
              <path
                fillRule="evenodd"
                d="M.5 6C3 1.500 9 1.500 11.500 6 9 10.500 3 10.500.5 6zm3.200 0a2.300 2.300 0 1 0 4.600 0 2.300 2.300 0 1 0-4.600 0z"
                {...solid}
              />
              <circle cx="6" cy="6" r="1.100" {...solid} />
            </Icon>
          </button>
          <div className="flex flex-1 items-center rounded-[2px] bg-[#696969] pr-[13px] pl-[3px]">
            <span className="mr-[7px] h-[27px] w-5 border border-[#333] bg-white" />
            <span className="font-bold text-white">背景</span>
            <Icon size="size-3" box="0 0 12 12" className="ml-auto">
              <rect x="2" y="5" width="8" height="6" />
              <path d="M3.800 5V3.200a2.200 2.200 0 0 1 4.400 0V5M6 7v2" />
            </Icon>
          </div>
        </div>
      </div>
      <div className="flex h-[22px] shrink-0 items-center justify-between border-t border-[#414141] bg-[#535353] pr-[23px] pl-10 text-[#e2e2e2]">
        {footer.map((f) => (
          <button key={f.name} aria-label={f.name} className={f.dim ? 'text-[#939393]' : ''}>
            <Icon size="size-3" box="0 0 12 12">
              {f.art}
            </Icon>
          </button>
        ))}
      </div>
    </section>
  );
}

function Watermark() {
  return (
    <div className="pointer-events-none absolute right-[57px] bottom-6 flex flex-col text-[#d2d2d2]">
      <div className="flex h-16 items-end">
        <span className="font-['Liberation_Sans',sans-serif] text-[42px] leading-[38px] font-bold">Bai</span>
        <span className="grid items-end justify-items-center">
          <svg viewBox="0 0 56 62" className="col-start-1 row-start-1 h-[62px] w-14" fill="currentColor" aria-hidden="true">
            <ellipse cx="7.5" cy="24" rx="7" ry="9" transform="rotate(-8 7.5 24)" />
            <ellipse cx="21" cy="10" rx="6.5" ry="9.5" />
            <ellipse cx="38" cy="11" rx="6.5" ry="9.5" transform="rotate(10 38 11)" />
            <ellipse cx="49" cy="28" rx="7" ry="9" transform="rotate(4 49 28)" />
            <path d="M28 25c8 0 11 9 17 14 5 4 8 10 5 16-3 7-13 6-22 5-9 1-19 2-22-5-3-6 0-12 5-16 6-5 9-14 17-14z" />
          </svg>
          <span className="col-start-1 row-start-1 font-['Liberation_Sans',sans-serif] text-[28px] leading-[34px] font-bold text-[#4e4e4e]">
            du
          </span>
        </span>
        <span className="ml-1 font-['Noto_Sans_CJK_SC',sans-serif] text-[32px] leading-[40px] font-bold">经验</span>
      </div>
      <span className="font-['Noto_Sans',sans-serif] text-[22px] leading-7">jingyan.baidu.com</span>
    </div>
  );
}

export default function App() {
  return (
    <div className="relative flex h-screen flex-col overflow-hidden bg-[#414141] font-['Inter','Noto_Sans_CJK_SC',sans-serif]">
      <MenuBar />
      <TitleBar />
      <OptionsBar />
      <div className="flex min-h-0 flex-1">
        <Toolbar />
        <div className="w-0.5 shrink-0 bg-[#434343]" />
        <DocumentArea />
        <Dock groups={dockOne} />
        <Dock groups={dockTwo} />
        <div className="flex w-[212px] shrink-0 flex-col bg-[#535353] text-[9px] leading-none text-[#dadada]">
          <div className="flex h-[11px] shrink-0 items-center justify-end bg-[#434343] pr-1.5">
            <DoubleChevron />
          </div>
          <Properties />
          <div className="h-[23px] shrink-0 border-b border-[#404040]" />
          <Layers />
        </div>
      </div>
      <Watermark />
    </div>
  );
}
